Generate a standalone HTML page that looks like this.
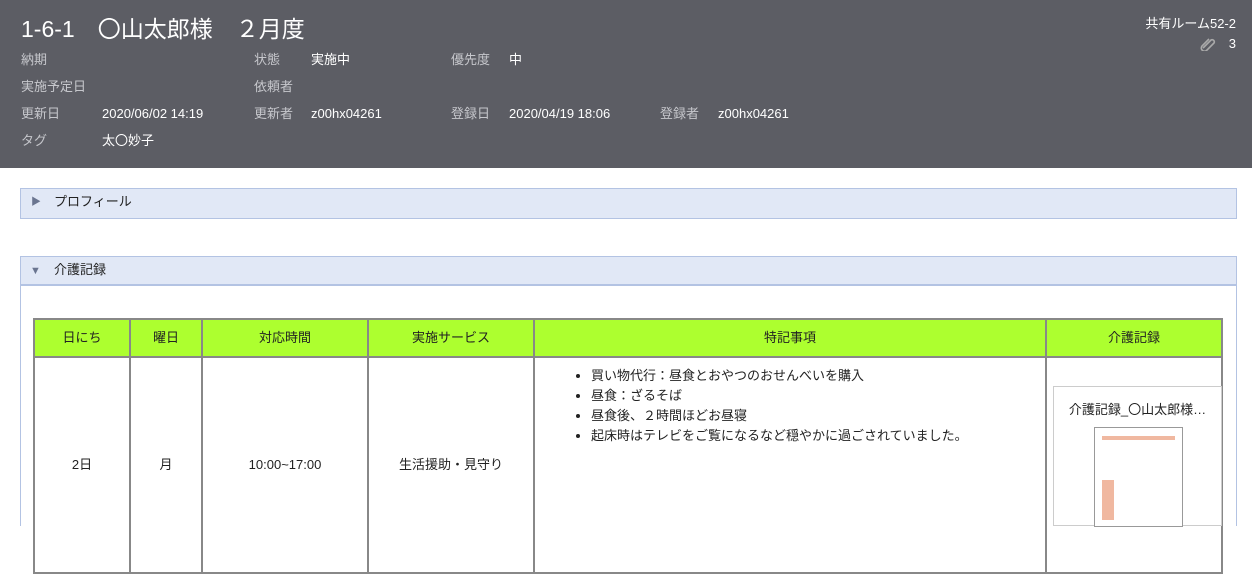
<!DOCTYPE html>
<html><head><meta charset="utf-8"><style>
*{margin:0;padding:0;box-sizing:border-box}
body{width:1252px;height:512px;overflow:hidden;background:#fff;font-family:"Liberation Sans","Noto Sans CJK JP",sans-serif;font-size:13px;color:#222;position:relative;line-height:16px}
.hd{position:absolute;left:0;top:0;width:1252px;height:168px;background:#5c5d64;color:#fff}
.hd .t{position:absolute;left:21px;top:14px;font-size:23px;line-height:30px;white-space:pre}
.l,.v{position:absolute;font-size:13px;line-height:16px;height:16px}
.l{color:#c6c7cc}
.v{color:#fff}
.panel{position:absolute;left:20px;width:1217px;border:1px solid #b3c3e3}
.ph{height:29px;background:#e1e8f6;border-bottom:2px solid #b3c3e3;position:relative;font-size:13px}
.ph span{position:absolute;left:33px;top:5px;line-height:16px}
table{position:absolute;left:33px;top:318px;border-collapse:collapse;width:1190px}
td,th{border:2px solid #888;text-align:center;font-weight:normal;font-size:13px}
th{background:#adff2f;height:38px}
</style></head><body>
<div class="hd">
<div class="t">1-6-1　〇山太郎様　２月度</div>
<div class="l" style="left:21px;top:52px">納期</div>
<div class="l" style="left:254px;top:52px">状態</div><div class="v" style="left:311px;top:52px">実施中</div>
<div class="l" style="left:451px;top:52px">優先度</div><div class="v" style="left:509px;top:52px">中</div>
<div class="l" style="left:21px;top:79px">実施予定日</div>
<div class="l" style="left:254px;top:79px">依頼者</div>
<div class="l" style="left:21px;top:106px">更新日</div><div class="v" style="left:102px;top:106px">2020/06/02 14:19</div>
<div class="l" style="left:254px;top:106px">更新者</div><div class="v" style="left:311px;top:106px">z00hx04261</div>
<div class="l" style="left:451px;top:106px">登録日</div><div class="v" style="left:509px;top:106px">2020/04/19 18:06</div>
<div class="l" style="left:660px;top:106px">登録者</div><div class="v" style="left:718px;top:106px">z00hx04261</div>
<div class="l" style="left:21px;top:133px">タグ</div><div class="v" style="left:102px;top:133px">太〇妙子</div>
<div class="v" style="right:16px;top:16px">共有ルーム52-2</div>
<svg style="position:absolute;left:1200px;top:37px" width="16" height="14" viewBox="0 0 16 14"><path d="M3 11 L11 3 A2.2 2.2 0 0 1 14 6 L7 13 A3 3 0 0 1 2 9 L9 2" fill="none" stroke="#aaa" stroke-width="1.6"/></svg>
<div class="v" style="right:16px;top:36px">3</div>
</div>
<div class="panel" style="top:188px;height:31px"><div class="ph" style="border-bottom:none;height:29px"><span style="left:10px;color:#6a7590;font-size:10px;top:6px">▶</span><span>プロフィール</span></div></div>
<div class="panel" style="top:256px;height:270px;border-bottom:none"><div class="ph"><span style="left:9px;color:#6a7590;font-size:11px;top:6px">▼</span><span>介護記録</span></div></div>
<table>
<tr><th style="width:96px">日にち</th><th style="width:72px">曜日</th><th style="width:166px">対応時間</th><th style="width:166px">実施サービス</th><th style="width:512px">特記事項</th><th>介護記録</th></tr>
<tr style="height:216px"><td>2日</td><td>月</td><td>10:00~17:00</td><td>生活援助・見守り</td>
<td style="text-align:left;vertical-align:top;padding:8px 0 0 56px;line-height:20px"><ul style="list-style:disc"><li>買い物代行：昼食とおやつのおせんべいを購入</li><li>昼食：ざるそば</li><li>昼食後、２時間ほどお昼寝</li><li>起床時はテレビをご覧になるなど穏やかに過ごされていました。</li></ul></td>
<td style="vertical-align:top;position:relative"><div style="position:absolute;left:6px;top:28px;width:169px;height:140px;border:1px solid #ccc"><div style="margin-top:15px;text-align:center">介護記録_〇山太郎様…</div><div style="position:absolute;left:40px;top:40px;width:89px;height:100px;border:1px solid #999;background:#fff"><div style="margin:8px 7px 0;height:4px;background:#f0b8a0"></div><div style="margin:40px 7px 0 7px;height:40px;width:12px;background:#f0b8a0"></div></div></div></td></tr>
</table>
</body></html>
